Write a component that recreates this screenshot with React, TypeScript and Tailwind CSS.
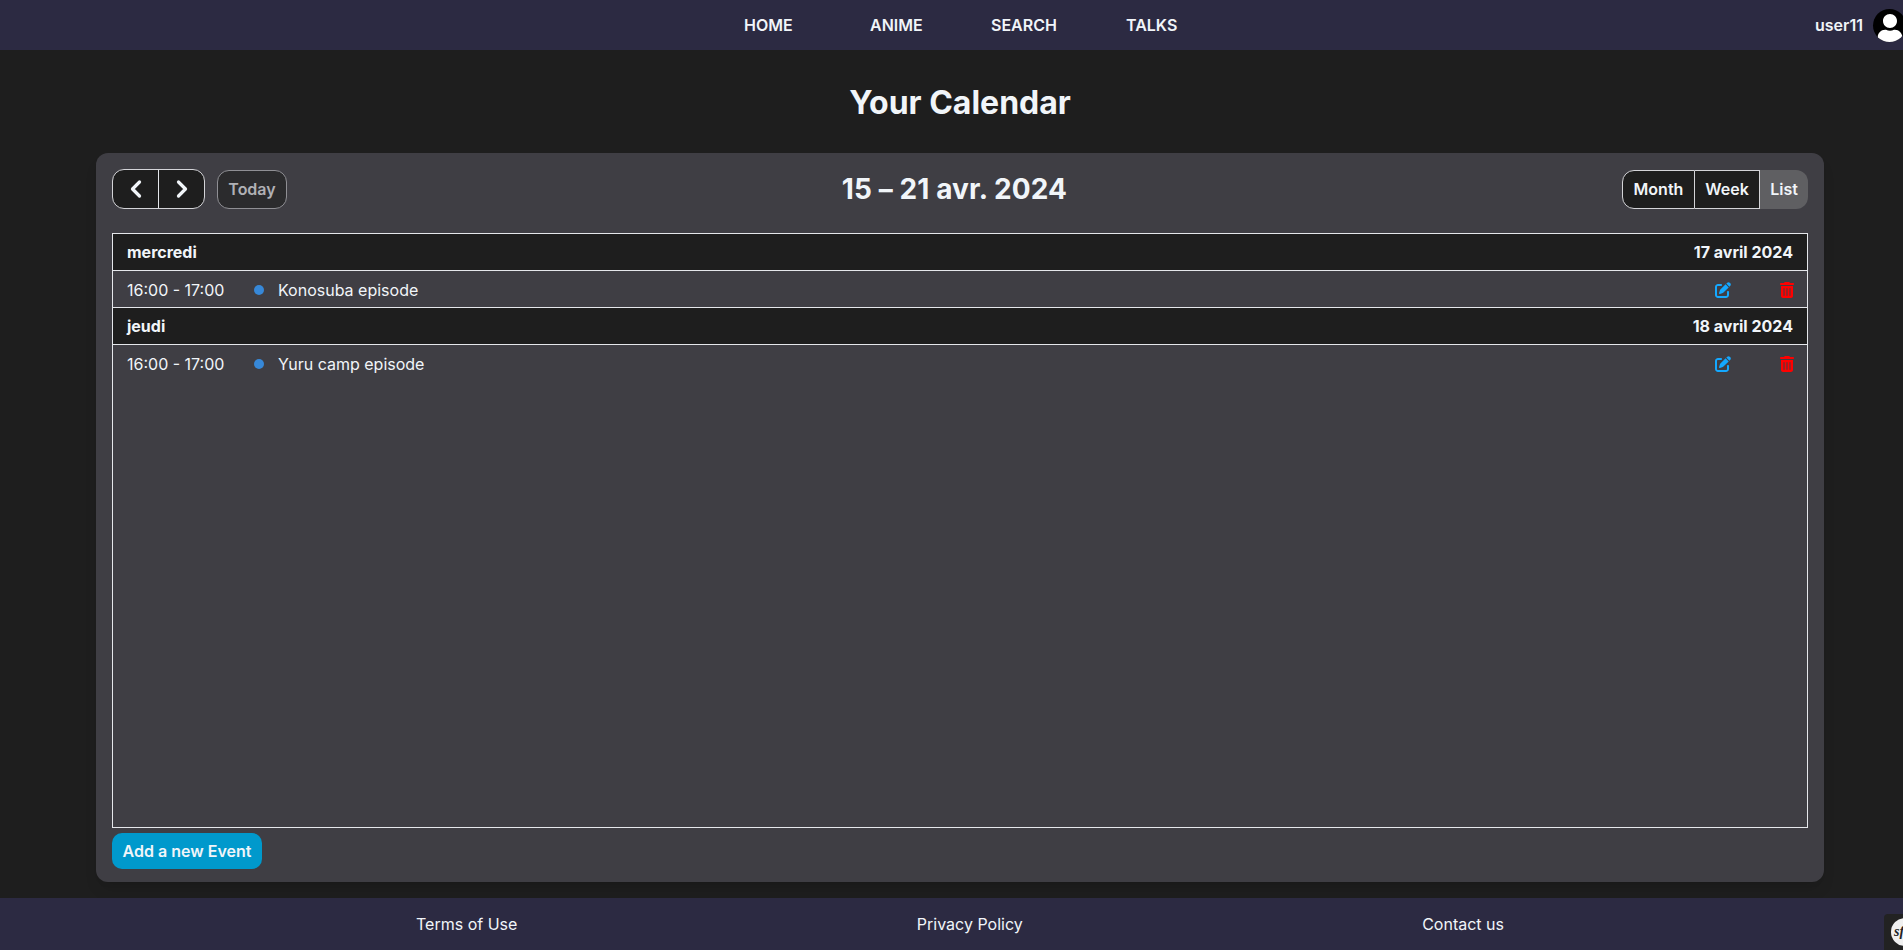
import { ChevronLeft, ChevronRight } from "lucide-react";
import { FaUser } from "react-icons/fa";
import { FaPenToSquare, FaTrashCan } from "react-icons/fa6";

const NAV_LINKS = [
  { label: "HOME", className: "left-[744px]" },
  { label: "ANIME", className: "left-[870px]" },
  { label: "SEARCH", className: "left-[991px]" },
  { label: "TALKS", className: "left-[1126px]" },
];

const DAYS = [
  { name: "mercredi", date: "17 avril 2024", title: "Konosuba episode" },
  { name: "jeudi", date: "18 avril 2024", title: "Yuru camp episode" },
];

function Header() {
  return (
    <header className="relative h-[50px] shrink-0 bg-[#2c2a42]">
      {NAV_LINKS.map((link) => (
        <a key={link.label} className={`absolute top-[14px] text-base leading-[22px] font-semibold text-[#f1f5f9] ${link.className}`}>
          {link.label}
        </a>
      ))}
      <span className="absolute top-[14px] left-[1815px] text-base leading-[22px] font-semibold text-[#f1f5f9]">user11</span>
      <div className="absolute top-[9px] left-[1873px] h-[33px] w-[33px] overflow-hidden rounded-full bg-black">
        <FaUser className="mx-auto mt-[5px] text-white" size={28} />
      </div>
    </header>
  );
}

function Toolbar() {
  return (
    <div className="flex h-10 items-center justify-between">
      <div className="flex items-center gap-3">
        <div className="flex h-10 w-[93px] overflow-hidden rounded-xl border border-[#d4d4d8] bg-[#1e1e1e] text-[#f1f5f9]">
          <button className="flex flex-1 items-center justify-center border-r border-[#e5e7eb]">
            <ChevronLeft size={28} strokeWidth={2.8} />
          </button>
          <button className="flex flex-1 items-center justify-center">
            <ChevronRight size={28} strokeWidth={2.8} />
          </button>
        </div>
        <button className="h-[39px] w-[70px] rounded-xl border border-[#8f8f94] bg-[#2b2b2d] text-base font-semibold text-[#b0b0b5]">Today</button>
      </div>
      <h2 className="text-[28px] leading-none font-bold tracking-[0.1px] text-[#f1f5f9]">15 – 21 avr. 2024</h2>
      <div className="flex h-[39px] w-[186px] text-base font-semibold text-[#f1f5f9]">
        <button className="w-[73px] rounded-l-xl border border-[#d4d4d8] bg-[#1e1e1e]">Month</button>
        <button className="w-[65px] border-y border-r border-[#d4d4d8] bg-[#1e1e1e]">Week</button>
        <button className="w-12 rounded-r-xl bg-[#5f5f62]">List</button>
      </div>
    </div>
  );
}

function EventList() {
  return (
    <div className="mt-6 h-[595px] border border-[#e5e7eb] text-base text-[#f1f5f9]">
      {DAYS.map((day, index) => (
        <div key={day.name}>
          <div className={`flex items-center justify-between bg-[#1e1e1e] px-[14px] font-bold ${index > 0 ? "h-[37px] border-t border-[#e5e7eb]" : "h-9"}`}>
            <span>{day.name}</span>
            <span>{day.date}</span>
          </div>
          <div className="flex h-[37px] items-center border-t border-[#e5e7eb] pt-px pr-3 pl-[14px]">
            <span className="w-[127px]">16:00 - 17:00</span>
            <span className="h-[10px] w-[10px] rounded-full bg-[#3788d8]" />
            <span className="ml-[14px]">{day.title}</span>
            <FaPenToSquare className="mr-[48px] ml-auto text-[#14a8ff]" size={16} />
            <FaTrashCan className="text-[#ff0000]" size={16} />
          </div>
        </div>
      ))}
    </div>
  );
}

function Footer() {
  return (
    <footer className="flex h-[52px] shrink-0 items-center justify-between bg-[#2c2a42] pr-[399px] pl-[416px] text-base text-[#f1f5f9]">
      <a>Terms of Use</a>
      <a>Privacy Policy</a>
      <a>Contact us</a>
    </footer>
  );
}

export default function App() {
  return (
    <div className="relative flex h-[950px] flex-col overflow-hidden bg-[#1e1e1e] font-['Inter',sans-serif]">
      <Header />
      <main className="mr-[79px] ml-24 flex-1">
        <h1 className="mt-[34px] text-center text-[32px] leading-[38px] font-bold text-[#f1f5f9]">Your Calendar</h1>
        <section className="mt-[31px] h-[729px] rounded-xl bg-[#3f3e44] p-4 shadow-lg">
          <Toolbar />
          <EventList />
          <button className="mt-[5px] h-9 w-[150px] rounded-[10px] bg-[#0099cc] text-base font-semibold text-[#f1f5f9]">Add a new Event</button>
        </section>
      </main>
      <Footer />
      {/* symfony toolbar toggle */}
      <div className="absolute right-0 bottom-0 flex h-9 w-[19px] items-center rounded-tl bg-[#222222] pl-[7px]">
        <div className="flex h-7 w-7 shrink-0 items-center rounded-full bg-[#f0f0f0] pl-[3px] font-['Liberation_Serif',serif] text-sm leading-none font-bold text-[#222222] italic">
          sf
        </div>
      </div>
    </div>
  );
}
